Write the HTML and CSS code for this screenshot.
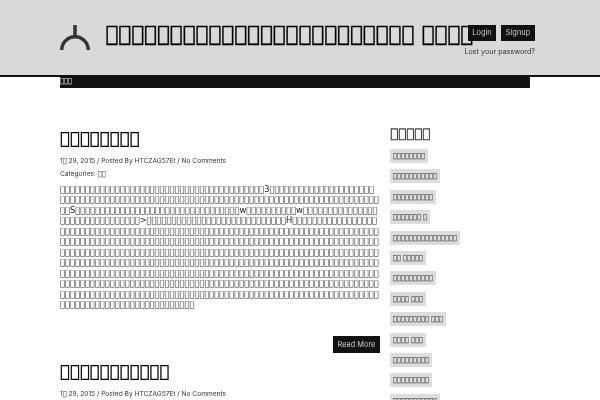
FILE: index.html
```html
<!DOCTYPE html>
<html lang="zh"><head><meta charset="utf-8"><title>Blog</title><link rel="stylesheet" href="styles.css"></head>
<body>
<header class="top">
  <div class="top-inner">
    <svg class="logo" viewBox="0 0 30 25" width="30" height="25"><path d="M1.75 25A13.25 13.25 0 0 1 28.25 25M15 0V12" fill="none" stroke="#333" stroke-width="3.5"/></svg>
    <h1 class="site-title">&#xE000;&#xE000;&#xE000;&#xE000;&#xE000;&#xE000;&#xE000;&#xE000;&#xE000;&#xE000;&#xE000;&#xE000;&#xE000;&#xE000;&#xE000;&#xE000;&#xE000;&#xE000;&#xE000;&#xE000;&#xE000;&#xE000;&#xE000;&#xE000; &#xE000;&#xE000;&#xE000;&#xE000;</h1>
    <div class="account">
      <div class="account-buttons"><a class="btn login">Login</a><a class="btn signup">Signup</a></div>
      <a class="lost">Lost your password?</a>
    </div>
  </div>
</header>
<nav class="nav"><a class="nav-link">&#xE000;&#xE000;&#xE000;</a></nav>
<div class="layout">
  <main class="posts">
    <article class="post">
      <h2 class="post-title">&#xE000;&#xE000;&#xE000;&#xE000;&#xE000;&#xE000;&#xE000;&#xE000;</h2>
      <p class="meta">1<span class="tofu">&#xE000;</span> 29, 2015 / Posted By HTCZAG57Et / No Comments</p>
      <p class="meta cats">Categories: <span class="tofu">&#xE000;&#xE000;</span></p>
      <p class="excerpt">
&#xE000;&#xE000;&#xE000;&#xE000;&#xE000;&#xE000;&#xE000;&#xE000;&#xE000;&#xE000;&#xE000;&#xE000;&#xE000;&#xE000;&#xE000;&#xE000;&#xE000;&#xE000;&#xE000;&#xE000;&#xE000;&#xE000;&#xE000;&#xE000;&#xE000;&#xE000;&#xE000;&#xE000;&#xE000;&#xE000;&#xE000;&#xE000;&#xE000;&#xE000;&#xE000;&#xE000;&#xE000;&#xE000;&#xE000;&#xE000;&#xE000;3&#xE000;&#xE000;&#xE000;&#xE000;&#xE000;&#xE000;&#xE000;&#xE000;&#xE000;&#xE000;&#xE000;&#xE000;&#xE000;&#xE000;&#xE000;&#xE000;&#xE000;&#xE000;&#xE000;&#xE000;&#xE000;<br>
&#xE000;&#xE000;&#xE000;&#xE000;&#xE000;&#xE000;&#xE000;&#xE000;&#xE000;&#xE000;&#xE000;&#xE000;&#xE000;&#xE000;&#xE000;&#xE000;&#xE000;&#xE000;&#xE000;&#xE000;&#xE000;&#xE000;&#xE000;&#xE000;&#xE000;&#xE000;&#xE000;&#xE000;&#xE000;&#xE000;&#xE000;&#xE000;&#xE000;&#xE000;&#xE000;&#xE000;&#xE000;&#xE000;&#xE000;&#xE000;&#xE000;&#xE000;&#xE000;&#xE000;&#xE000;&#xE000;&#xE000;&#xE000;&#xE000;&#xE000;&#xE000;&#xE000;&#xE000;&#xE000;&#xE000;&#xE000;&#xE000;&#xE000;&#xE000;&#xE000;&#xE000;&#xE000;&#xE000;&#xE000;<br>
&#xE000;&#xE000;S&#xE000;&#xE000;&#xE000;&#xE000;&#xE000;&#xE000;&#xE000;&#xE000;&#xE000;&#xE000;&#xE000;&#xE000;&#xE000;&#xE000;&#xE000;&#xE000;&#xE000;&#xE000;&#xE000;&#xE000;&#xE000;&#xE000;&#xE000;&#xE000;&#xE000;&#xE000;&#xE000;&#xE000;&#xE000;&#xE000;&#xE000;&#xE000;&#xE000;w&#xE000;&#xE000;&#xE000;&#xE000;&#xE000;&#xE000;&#xE000;&#xE000;&#xE000;&#xE000;w&#xE000;&#xE000;&#xE000;&#xE000;&#xE000;&#xE000;&#xE000;&#xE000;&#xE000;&#xE000;&#xE000;&#xE000;&#xE000;&#xE000;&#xE000;<br>
&#xE000;&#xE000;&#xE000;&#xE000;&#xE000;&#xE000;&#xE000;&#xE000;&#xE000;&#xE000;&#xE000;&#xE000;&#xE000;&#xE000;&#xE000;&#xE000;&gt;&#xE000;&#xE000;&#xE000;&#xE000;&#xE000;&#xE000;&#xE000;&#xE000;&#xE000;&#xE000;&#xE000;&#xE000;&#xE000;&#xE000;&#xE000;&#xE000;&#xE000;&#xE000;&#xE000;&#xE000;&#xE000;&#xE000;&#xE000;&#xE000;&#xE000;&#xE000;&#xE000;&#xE000;H&#xE000;&#xE000;&#xE000;&#xE000;&#xE000;&#xE000;&#xE000;&#xE000;&#xE000;&#xE000;&#xE000;&#xE000;&#xE000;&#xE000;&#xE000;&#xE000;&#xE000;<br>
&#xE000;&#xE000;&#xE000;&#xE000;&#xE000;&#xE000;&#xE000;&#xE000;&#xE000;&#xE000;&#xE000;&#xE000;&#xE000;&#xE000;&#xE000;&#xE000;&#xE000;&#xE000;&#xE000;&#xE000;&#xE000;&#xE000;&#xE000;&#xE000;&#xE000;&#xE000;&#xE000;&#xE000;&#xE000;&#xE000;&#xE000;&#xE000;&#xE000;&#xE000;&#xE000;&#xE000;&#xE000;&#xE000;&#xE000;&#xE000;&#xE000;&#xE000;&#xE000;&#xE000;&#xE000;&#xE000;&#xE000;&#xE000;&#xE000;&#xE000;&#xE000;&#xE000;&#xE000;&#xE000;&#xE000;&#xE000;&#xE000;&#xE000;&#xE000;&#xE000;&#xE000;&#xE000;&#xE000;&#xE000;<br>
&#xE000;&#xE000;&#xE000;&#xE000;&#xE000;&#xE000;&#xE000;&#xE000;&#xE000;&#xE000;&#xE000;&#xE000;&#xE000;&#xE000;&#xE000;&#xE000;&#xE000;&#xE000;&#xE000;&#xE000;&#xE000;&#xE000;&#xE000;&#xE000;&#xE000;&#xE000;&#xE000;&#xE000;&#xE000;&#xE000;&#xE000;&#xE000;&#xE000;&#xE000;&#xE000;&#xE000;&#xE000;&#xE000;&#xE000;&#xE000;&#xE000;&#xE000;&#xE000;&#xE000;&#xE000;&#xE000;&#xE000;&#xE000;&#xE000;&#xE000;&#xE000;&#xE000;&#xE000;&#xE000;&#xE000;&#xE000;&#xE000;&#xE000;&#xE000;&#xE000;&#xE000;&#xE000;&#xE000;&#xE000;<br>
&#xE000;&#xE000;&#xE000;&#xE000;&#xE000;&#xE000;&#xE000;&#xE000;&#xE000;&#xE000;&#xE000;&#xE000;&#xE000;&#xE000;&#xE000;&#xE000;&#xE000;&#xE000;&#xE000;&#xE000;&#xE000;&#xE000;&#xE000;&#xE000;&#xE000;&#xE000;&#xE000;&#xE000;&#xE000;&#xE000;&#xE000;&#xE000;&#xE000;&#xE000;&#xE000;&#xE000;&#xE000;&#xE000;&#xE000;&#xE000;&#xE000;&#xE000;&#xE000;&#xE000;&#xE000;&#xE000;&#xE000;&#xE000;&#xE000;&#xE000;&#xE000;&#xE000;&#xE000;&#xE000;&#xE000;&#xE000;&#xE000;&#xE000;&#xE000;&#xE000;&#xE000;&#xE000;&#xE000;&#xE000;<br>
&#xE000;&#xE000;&#xE000;&#xE000;&#xE000;&#xE000;&#xE000;&#xE000;&#xE000;&#xE000;&#xE000;&#xE000;&#xE000;&#xE000;&#xE000;&#xE000;&#xE000;&#xE000;&#xE000;&#xE000;&#xE000;&#xE000;&#xE000;&#xE000;&#xE000;&#xE000;&#xE000;&#xE000;&#xE000;&#xE000;&#xE000;&#xE000;&#xE000;&#xE000;&#xE000;&#xE000;&#xE000;&#xE000;&#xE000;&#xE000;&#xE000;&#xE000;&#xE000;&#xE000;&#xE000;&#xE000;&#xE000;&#xE000;&#xE000;&#xE000;&#xE000;&#xE000;&#xE000;&#xE000;&#xE000;&#xE000;&#xE000;&#xE000;&#xE000;&#xE000;&#xE000;&#xE000;&#xE000;&#xE000;<br>
&#xE000;&#xE000;&#xE000;&#xE000;&#xE000;&#xE000;&#xE000;&#xE000;&#xE000;&#xE000;&#xE000;&#xE000;&#xE000;&#xE000;&#xE000;&#xE000;&#xE000;&#xE000;&#xE000;&#xE000;&#xE000;&#xE000;&#xE000;&#xE000;&#xE000;&#xE000;&#xE000;&#xE000;&#xE000;&#xE000;&#xE000;&#xE000;&#xE000;&#xE000;&#xE000;&#xE000;&#xE000;&#xE000;&#xE000;&#xE000;&#xE000;&#xE000;&#xE000;&#xE000;&#xE000;&#xE000;&#xE000;&#xE000;&#xE000;&#xE000;&#xE000;&#xE000;&#xE000;&#xE000;&#xE000;&#xE000;&#xE000;&#xE000;&#xE000;&#xE000;&#xE000;&#xE000;&#xE000;&#xE000;<br>
&#xE000;&#xE000;&#xE000;&#xE000;&#xE000;&#xE000;&#xE000;&#xE000;&#xE000;&#xE000;&#xE000;&#xE000;&#xE000;&#xE000;&#xE000;&#xE000;&#xE000;&#xE000;&#xE000;&#xE000;&#xE000;&#xE000;&#xE000;&#xE000;&#xE000;&#xE000;&#xE000;&#xE000;&#xE000;&#xE000;&#xE000;&#xE000;&#xE000;&#xE000;&#xE000;&#xE000;&#xE000;&#xE000;&#xE000;&#xE000;&#xE000;&#xE000;&#xE000;&#xE000;&#xE000;&#xE000;&#xE000;&#xE000;&#xE000;&#xE000;&#xE000;&#xE000;&#xE000;&#xE000;&#xE000;&#xE000;&#xE000;&#xE000;&#xE000;&#xE000;&#xE000;&#xE000;&#xE000;&#xE000;<br>
&#xE000;&#xE000;&#xE000;&#xE000;&#xE000;&#xE000;&#xE000;&#xE000;&#xE000;&#xE000;&#xE000;&#xE000;&#xE000;&#xE000;&#xE000;&#xE000;&#xE000;&#xE000;&#xE000;&#xE000;&#xE000;&#xE000;&#xE000;&#xE000;&#xE000;&#xE000;&#xE000;&#xE000;&#xE000;&#xE000;&#xE000;&#xE000;&#xE000;&#xE000;&#xE000;&#xE000;&#xE000;&#xE000;&#xE000;&#xE000;&#xE000;&#xE000;&#xE000;&#xE000;&#xE000;&#xE000;&#xE000;&#xE000;&#xE000;&#xE000;&#xE000;&#xE000;&#xE000;&#xE000;&#xE000;&#xE000;&#xE000;&#xE000;&#xE000;&#xE000;&#xE000;&#xE000;&#xE000;&#xE000;<br>
&#xE000;&#xE000;&#xE000;&#xE000;&#xE000;&#xE000;&#xE000;&#xE000;&#xE000;&#xE000;&#xE000;&#xE000;&#xE000;&#xE000;&#xE000;&#xE000;&#xE000;&#xE000;&#xE000;&#xE000;&#xE000;&#xE000;&#xE000;&#xE000;&#xE000;&#xE000;&#xE000;
      </p>
      <div class="more-row"><a class="btn more">Read More</a></div>
    </article>
    <article class="post">
      <h2 class="post-title">&#xE000;&#xE000;&#xE000;&#xE000;&#xE000;&#xE000;&#xE000;&#xE000;&#xE000;&#xE000;&#xE000;</h2>
      <p class="meta">1<span class="tofu">&#xE000;</span> 29, 2015 / Posted By HTCZAG57Et / No Comments</p>
    </article>
  </main>
  <aside class="sidebar">
    <h3 class="side-title">&#xE000;&#xE000;&#xE000;&#xE000;&#xE000;</h3>
    <ul class="tags">
      <li>&#xE000;&#xE000;&#xE000;&#xE000;&#xE000;&#xE000;&#xE000;&#xE000;</li>
      <li>&#xE000;&#xE000;&#xE000;&#xE000;&#xE000;&#xE000;&#xE000;&#xE000;&#xE000;&#xE000;&#xE000;</li>
      <li>&#xE000;&#xE000;&#xE000;&#xE000;&#xE000;&#xE000;&#xE000;&#xE000;&#xE000;&#xE000;</li>
      <li>&#xE000;&#xE000;&#xE000;&#xE000;&#xE000;&#xE000;&#xE000; &#xE000;</li>
      <li>&#xE000;&#xE000;&#xE000;&#xE000;&#xE000;&#xE000;&#xE000;&#xE000;&#xE000;&#xE000;&#xE000;&#xE000;&#xE000;&#xE000;&#xE000;&#xE000;</li>
      <li>&#xE000;&#xE000; &#xE000;&#xE000;&#xE000;&#xE000;&#xE000;</li>
      <li>&#xE000;&#xE000;&#xE000;&#xE000;&#xE000;&#xE000;&#xE000;&#xE000;&#xE000;&#xE000;</li>
      <li>&#xE000;&#xE000;&#xE000;&#xE000; &#xE000;&#xE000;&#xE000;</li>
      <li>&#xE000;&#xE000;&#xE000;&#xE000;&#xE000;&#xE000;&#xE000;&#xE000;&#xE000; &#xE000;&#xE000;&#xE000;</li>
      <li>&#xE000;&#xE000;&#xE000;&#xE000; &#xE000;&#xE000;&#xE000;</li>
      <li>&#xE000;&#xE000;&#xE000;&#xE000;&#xE000;&#xE000;&#xE000;&#xE000;&#xE000;</li>
      <li>&#xE000;&#xE000;&#xE000;&#xE000;&#xE000;&#xE000;&#xE000;&#xE000;&#xE000;</li>
      <li>&#xE000;&#xE000;&#xE000;&#xE000;&#xE000;&#xE000;&#xE000;&#xE000;&#xE000;&#xE000;&#xE000;</li>
    </ul>
  </aside>
</div>
</body></html>
```
FILE: styles.css
```css
*{box-sizing:border-box}
html,body{margin:0;height:400px;overflow:hidden}
body{background:#fff;color:#333;font-family:"DejaVu Sans",sans-serif}
.tofu{font-family:"DejaVu Sans",sans-serif}
.top{height:77px;background:#d9d9d9;border-bottom:2px solid #111}
.top-inner{display:flex;align-items:flex-start;width:475px;margin-left:60px;padding-top:25px;will-change:transform}
.logo{flex:none;display:block}
.site-title{flex:1;min-width:0;margin:-4px 0 0 15.5px;font-size:21.45px;line-height:26px;font-weight:700;color:#000;white-space:nowrap;-webkit-text-stroke:.35px #000}
.account{flex:none;position:relative;display:flex;flex-direction:column;align-items:flex-end;gap:5px}
.account-buttons{display:flex;gap:5px}
.btn{display:block;background:#111;color:#ccc;font-family:Inter,sans-serif;font-size:7.4px;line-height:16px;text-align:center}
.login{width:28px}
.signup{width:34px}
.lost{font-family:Inter,sans-serif;font-size:7.2px;line-height:10px;color:#333;padding-top:1px}
.nav{width:470px;height:11px;margin-left:60px;background:#111;color:#fff;font-size:6.7px;line-height:9px}
.nav-link{display:block;will-change:transform}
.layout{display:grid;grid-template-columns:320px 140px;gap:10px;width:470px;margin-left:60px;padding-top:38px;will-change:transform}
.post{padding-bottom:6px}
.post-title{margin:0;font-size:16.6px;line-height:26px;font-weight:700;color:#000;-webkit-text-stroke:.3px #000}
.meta{margin:4.5px 0 0;font-family:Inter,sans-serif;font-size:6.6px;line-height:9px;color:#333}
.cats{margin-top:4px}
.excerpt{margin:5.5px 0 0;font-size:8.3px;line-height:10.45px;white-space:nowrap;color:#222}
.more-row{display:flex;justify-content:flex-end;margin-top:27px}
.more{width:47px;line-height:17px;font-size:7.4px}
.side-title{margin:0;font-size:13.3px;line-height:15px;font-weight:700;color:#222;-webkit-text-stroke:.15px #222}
.tags{list-style:none;margin:8px 0 0;padding:0;display:flex;flex-direction:column;align-items:flex-start;gap:6.4px}
.tags li{background:#ddd;padding:0 2.8px;font-size:6.7px;line-height:14px;color:#222}
```
